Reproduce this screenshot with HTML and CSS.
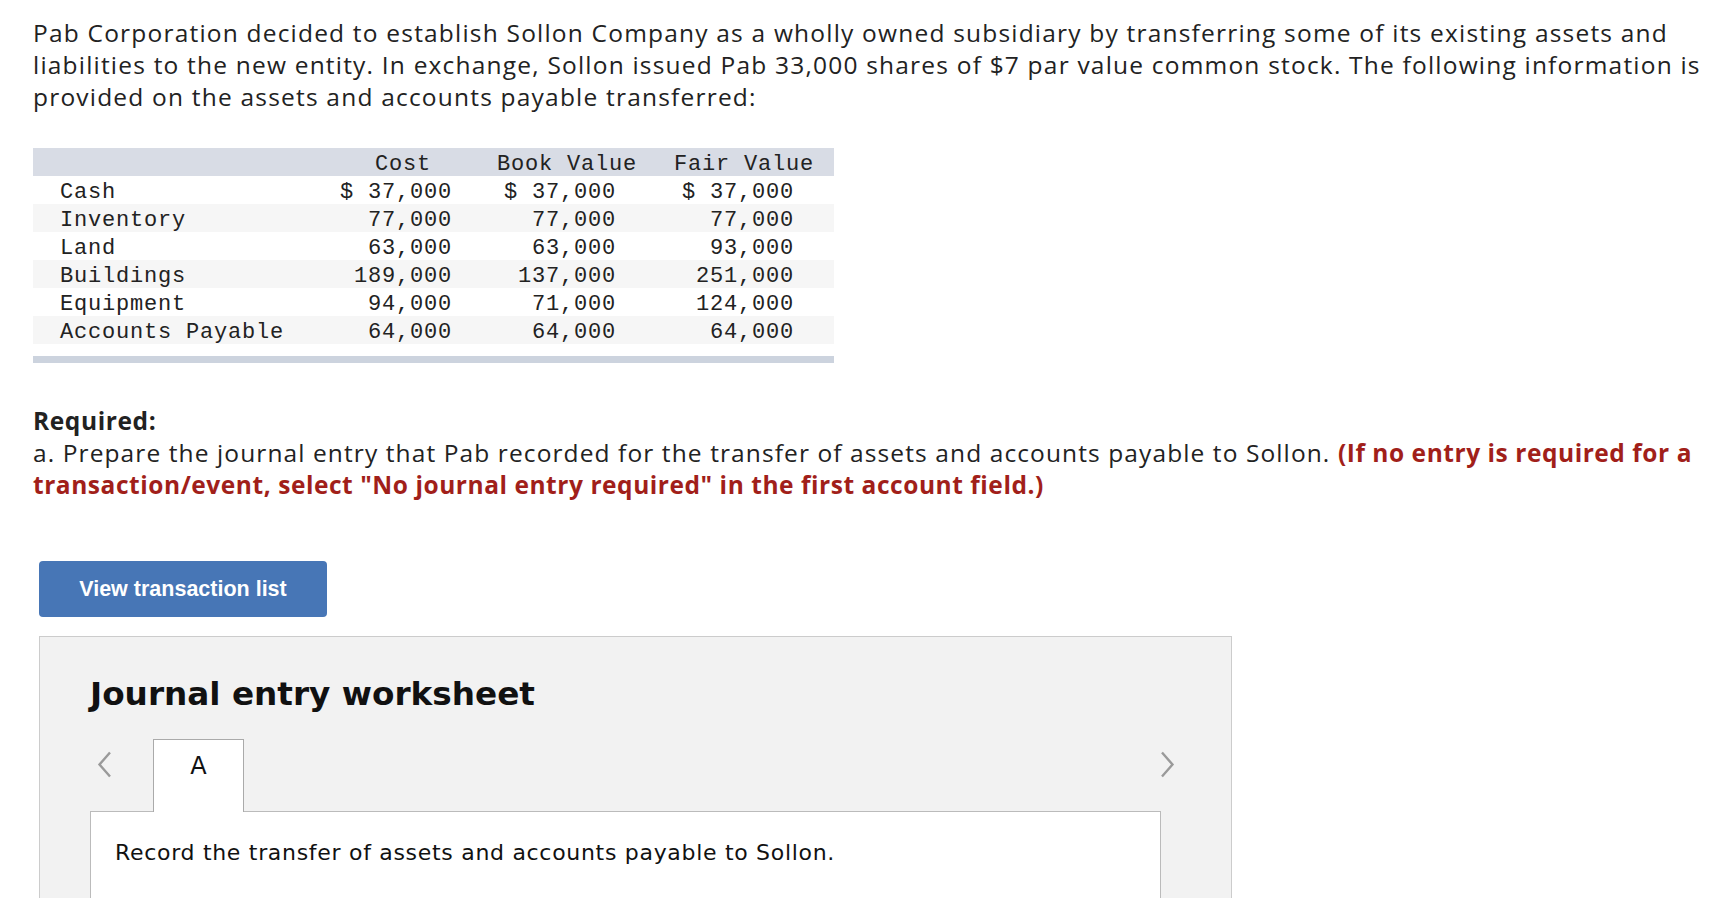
FILE: index.html
```html
<!DOCTYPE html>
<html>
<head>
<meta charset="utf-8">
<link rel="stylesheet" href="styles.css">
</head>
<body>
<div class="page">
  <p class="intro">Pab Corporation decided to establish Sollon Company as a wholly owned subsidiary by transferring some of its existing assets and<br>liabilities to the new entity. In exchange, Sollon issued Pab 33,000 shares of $7 par value common stock. The following information is<br>provided on the assets and accounts payable transferred:</p>

  <div class="data">
    <div class="row head">
      <div class="cell label"></div>
      <div class="cell c1">Cost</div>
      <div class="cell c2">Book Value</div>
      <div class="cell c3">Fair Value</div>
    </div>
    <div class="row">
      <div class="cell label">Cash</div>
      <div class="cell c1">$ 37,000</div>
      <div class="cell c2">$ 37,000</div>
      <div class="cell c3">$ 37,000</div>
    </div>
    <div class="row alt">
      <div class="cell label">Inventory</div>
      <div class="cell c1">77,000</div>
      <div class="cell c2">77,000</div>
      <div class="cell c3">77,000</div>
    </div>
    <div class="row">
      <div class="cell label">Land</div>
      <div class="cell c1">63,000</div>
      <div class="cell c2">63,000</div>
      <div class="cell c3">93,000</div>
    </div>
    <div class="row alt">
      <div class="cell label">Buildings</div>
      <div class="cell c1">189,000</div>
      <div class="cell c2">137,000</div>
      <div class="cell c3">251,000</div>
    </div>
    <div class="row">
      <div class="cell label">Equipment</div>
      <div class="cell c1">94,000</div>
      <div class="cell c2">71,000</div>
      <div class="cell c3">124,000</div>
    </div>
    <div class="row alt">
      <div class="cell label">Accounts Payable</div>
      <div class="cell c1">64,000</div>
      <div class="cell c2">64,000</div>
      <div class="cell c3">64,000</div>
    </div>
    <div class="foot"></div>
  </div>

  <div class="required">
    <div class="req-title">Required:</div>
    <div class="req-text">a. Prepare the journal entry that Pab recorded for the transfer of assets and accounts payable to Sollon. <span class="warn">(If no entry is required for a<br>transaction/event, select "No journal entry required" in the first account field.)</span></div>
  </div>

  <button class="btn" type="button">View transaction list</button>

  <div class="worksheet">
    <h2 class="ws-title">Journal entry worksheet</h2>
    <div class="tabrow">
      <svg class="chev left" width="15" height="27" viewBox="0 0 15 27"><polyline points="13,1.5 2.5,13.5 13,25.5" fill="none" stroke="#9a9a9a" stroke-width="2.4"/></svg>
      <div class="tab">A</div>
      <div class="spacer"></div>
      <svg class="chev right" width="15" height="27" viewBox="0 0 15 27"><polyline points="2,1.5 12.5,13.5 2,25.5" fill="none" stroke="#9a9a9a" stroke-width="2.4"/></svg>
    </div>
    <div class="ws-body">
      <p class="ws-text">Record the transfer of assets and accounts payable to Sollon.</p>
    </div>
  </div>
</div>
</body>
</html>
```

FILE: styles.css
```css
html, body {
  margin: 0;
  padding: 0;
  background: #ffffff;
}

body {
  overflow: hidden;
  height: 898px;
}

.page {
  padding: 17px 0 0 33px;
  font-family: "Open Sans", "Lato", sans-serif;
  color: #222222;
}

.intro {
  margin: 0;
  width: 1683px;
  white-space: nowrap;
  font-size: 24.5px;
  line-height: 32px;
  letter-spacing: 1.2px;
}

.data {
  margin-top: 35px;
  width: 801px;
  font-family: "Liberation Mono", "Courier New", monospace;
  font-size: 22px;
  letter-spacing: 0.8px;
  color: #222222;
}

.row {
  display: grid;
  grid-template-columns: 293px 154px 174px 180px;
  height: 28px;
  line-height: 28px;
}

.row.head {
  background: #d8dce5;
}

.row.alt {
  background: #f6f6f6;
}

.cell {
  white-space: pre;
  text-align: right;
  padding-top: 3px;
}

.cell.label {
  text-align: left;
  padding-left: 27px;
}

.cell.c1 { padding-right: 28px; }
.cell.c2 { padding-right: 38px; }
.cell.c3 { padding-right: 40px; }

.row.head .cell {
  text-align: center;
  padding-right: 0;
}

.foot {
  margin-top: 12px;
  height: 7px;
  background: #ccd3de;
}

.required {
  margin-top: 42px;
  width: 1683px;
  white-space: nowrap;
  font-size: 24.5px;
  line-height: 32px;
  letter-spacing: 1.1px;
}

.req-title {
  font-weight: 700;
  letter-spacing: 0.6px;
}

.warn {
  color: #a11f1a;
  font-weight: 700;
  letter-spacing: 0.55px;
}

.btn {
  display: flex;
  align-items: center;
  justify-content: center;
  margin: 60px 0 0 6px;
  width: 288px;
  height: 56px;
  padding: 0;
  border: none;
  border-radius: 4px;
  background: #4776b6;
  color: #ffffff;
  font-family: "Liberation Sans", Arial, sans-serif;
  font-weight: 700;
  font-size: 21.5px;
}

.worksheet {
  margin: 19px 0 0 6px;
  width: 1193px;
  height: 400px;
  box-sizing: border-box;
  border: 1px solid #cccccc;
  background: #f2f2f2;
  padding: 37px 70px 0 50px;
}

.ws-title {
  margin: 0;
  font-family: "DejaVu Sans", Verdana, sans-serif;
  font-weight: 700;
  font-size: 32.7px;
  line-height: 40px;
  color: #111111;
}

.tabrow {
  display: flex;
  align-items: flex-end;
  margin-top: 25px;
  margin-right: -16px;
  position: relative;
  z-index: 1;
}

.chev {
  display: block;
  align-self: flex-start;
  margin-top: 12px;
}

.chev.left {
  margin-left: 7px;
}

.chev.right {
  margin-right: 2px;
}

.spacer {
  flex: 1;
}

.tab {
  margin-left: 41px;
  margin-bottom: -1px;
  width: 91px;
  height: 73px;
  box-sizing: border-box;
  border: 1px solid #aaaaaa;
  border-bottom: none;
  background: #ffffff;
  text-align: center;
  padding-top: 12px;
  font-family: "DejaVu Sans", Verdana, sans-serif;
  font-size: 24px;
  line-height: 28px;
  color: #111111;
}

.ws-body {
  border: 1px solid #bbbbbb;
  background: #ffffff;
  height: 300px;
  padding: 27px 0 0 24px;
}

.ws-text {
  margin: 0;
  font-family: "DejaVu Sans", Verdana, sans-serif;
  font-size: 22px;
  letter-spacing: 0.7px;
  line-height: 28px;
  color: #111111;
}
```
